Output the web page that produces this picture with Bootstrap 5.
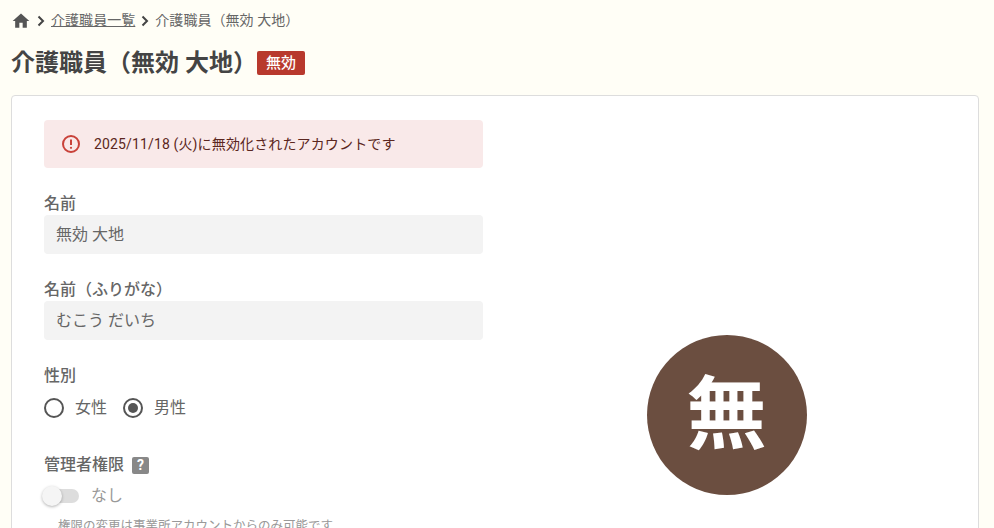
<!DOCTYPE html>
<html lang="ja"><head><meta charset="utf-8">
<link href="https://cdn.jsdelivr.net/npm/bootstrap@5.3.0/dist/css/bootstrap.min.css" rel="stylesheet">
<style>
html,body{background:#fffef6;}
body{font-family:Roboto,"Noto Sans CJK JP",sans-serif;color:#444;font-size:14px;}
.pg-wrap{padding:0 15px 24px 11px;}
.crumbs{height:41px;gap:5px;font-size:14px;color:#666;letter-spacing:.05px;}
.crumbs a{color:#666;}
.pg-title{font-size:24px;font-weight:700;color:#444;line-height:36px;margin:0;}
.head-row{height:36px;margin-bottom:14px;margin-top:4px;}
.tag-off{background:#b8392d;color:#fff;font-size:15px;font-weight:500;line-height:24px;height:24px;padding:0 9px;border-radius:2px;}
.sheet{background:#fff;border:1px solid #ddd;border-radius:4px;padding:24px 32px 32px;}
.cols{gap:24px;}
.left-col{width:439px;min-height:590px;flex:none;}
.right-col{flex:1;}
.warn{background:#f9e9e9;border-radius:4px;height:48px;padding:0 17px;gap:13px;color:#5b2620;font-size:14px;letter-spacing:.14px;margin-bottom:24px;}
.fld{margin-bottom:24px;}
.fld-lab{font-size:16px;font-weight:500;color:#666;line-height:24px;margin-bottom:-1px;display:block;}
.fld-val{background:#f3f3f3;border-radius:4px;height:39px;line-height:39px;padding:0 12px;font-size:16px;color:#666;}
.radios{gap:16px;height:32px;margin-top:5px;margin-bottom:29px;font-size:16px;color:#666;}
.rd{gap:11px;}
.qm{background:#888;color:#fff;font-size:14px;font-weight:700;width:17px;height:17px;line-height:17px;text-align:center;border-radius:2px;display:inline-block;margin-left:8px;vertical-align:0;}
.switch-row{gap:12px;height:28px;color:#999;font-size:16px;margin-top:6px;}
.sw-track{width:35px;height:14px;background:#ddd;border-radius:7px;position:relative;}
.sw-knob{position:absolute;left:-2px;top:-3px;width:20px;height:20px;border-radius:50%;background:#f5f5f5;box-shadow:0 1px 3px rgba(0,0,0,.3);}
.hint{font-size:12.5px;color:#999;padding-left:14px;margin-top:7px;}
.avatar{width:160px;height:160px;border-radius:50%;background:#6b4e40;color:#fff;font-size:80px;font-weight:700;line-height:160px;text-align:center;}
</style></head>
<body>
<div class="pg-wrap">
  <nav class="crumbs d-flex align-items-center">
    <svg width="20" height="20" viewBox="0 0 24 24" fill="#555"><path d="M10 20v-6h4v6h5v-8h3L12 3 2 12h3v8z"/></svg>
    <svg width="10" height="12" viewBox="0 0 10 12" fill="none" stroke="#444" stroke-width="2"><path d="M2.500 1.500 7 6l-4.500 4.500"/></svg>
    <a href="#">介護職員一覧</a>
    <svg width="10" height="12" viewBox="0 0 10 12" fill="none" stroke="#444" stroke-width="2"><path d="M2.500 1.500 7 6l-4.500 4.500"/></svg>
    <span>介護職員（無効 大地）</span>
  </nav>
  <div class="head-row d-flex align-items-center">
    <h1 class="pg-title">介護職員（無効 大地）</h1>
    <span class="tag-off">無効</span>
  </div>
  <div class="sheet">
    <div class="cols d-flex">
      <div class="left-col">
        <div class="warn d-flex align-items-center">
          <svg width="20" height="20" viewBox="0 0 20 20" fill="none"><circle cx="10" cy="10" r="8" stroke="#c9423a" stroke-width="2"/><path d="M10 5.500v5.500" stroke="#c9423a" stroke-width="2"/><circle cx="10" cy="13.800" r="1.100" fill="#c9423a"/></svg>
          <span>2025/11/18 (火)に無効化されたアカウントです</span>
        </div>
        <div class="fld"><span class="fld-lab">名前</span><div class="fld-val">無効 大地</div></div>
        <div class="fld"><span class="fld-lab">名前（ふりがな）</span><div class="fld-val">むこう だいち</div></div>
        <div class="fld">
          <span class="fld-lab">性別</span>
          <div class="radios d-flex align-items-center">
            <div class="rd d-flex align-items-center">
              <svg width="20" height="20" viewBox="0 0 20 20" fill="none"><circle cx="10" cy="10" r="9" stroke="#555" stroke-width="2"/></svg><span>女性</span>
            </div>
            <div class="rd d-flex align-items-center">
              <svg width="20" height="20" viewBox="0 0 20 20" fill="none"><circle cx="10" cy="10" r="9" stroke="#555" stroke-width="2"/><circle cx="10" cy="10" r="5" fill="#555"/></svg><span>男性</span>
            </div>
          </div>
          <span class="fld-lab">管理者権限<span class="qm">?</span></span>
          <div class="switch-row d-flex align-items-center">
            <div class="sw-track"><div class="sw-knob"></div></div><span>なし</span>
          </div>
          <div class="hint">権限の変更は事業所アカウントからのみ可能です</div>
        </div>
      </div>
      <div class="right-col d-flex align-items-center justify-content-center">
        <div class="avatar">無</div>
      </div>
    </div>
  </div>
</div>
<script src="https://cdn.jsdelivr.net/npm/bootstrap@5.3.0/dist/js/bootstrap.bundle.min.js"></script>
</body></html>
